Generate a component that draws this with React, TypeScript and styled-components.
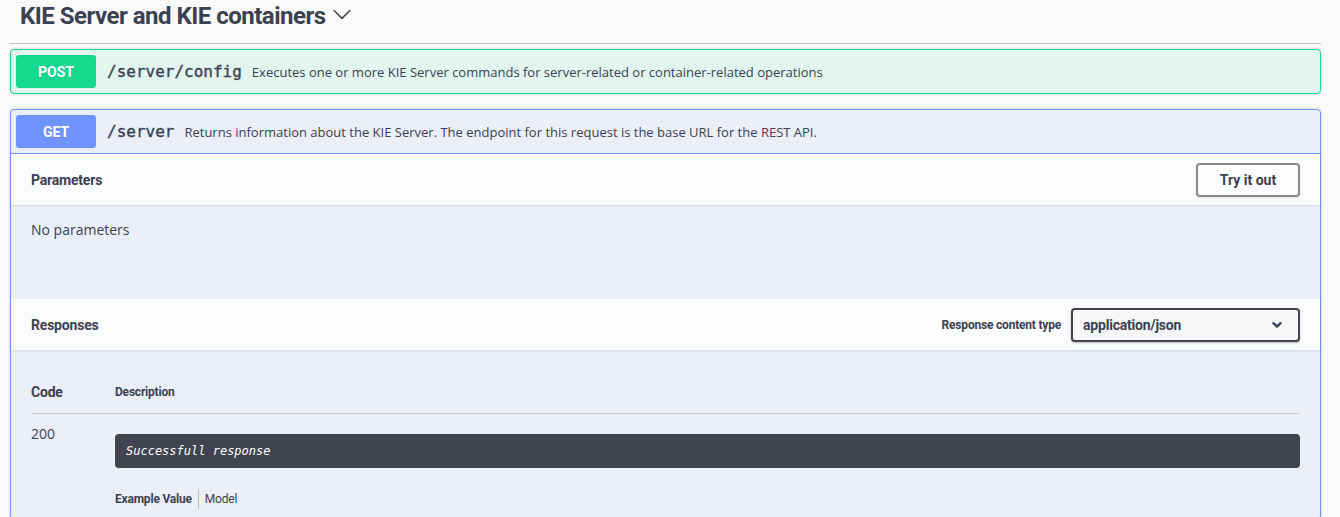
import React from "react";
import styled, { createGlobalStyle } from "styled-components";

const Global = createGlobalStyle`
  html, body { margin: 0; padding: 0; background: #fafafa; }
  body { font-family: "Open Sans", sans-serif; color: #3b4151; }
  * { box-sizing: border-box; }
`;

const HEAD = `Roboto, "Open Sans", sans-serif`;
const MONO = `"DejaVu Sans Mono", "Liberation Mono", monospace`;

const Wrapper = styled.div`
  padding: 0 19px 0 10px;
`;

const TagHeader = styled.h4`
  display: flex;
  align-items: center;
  margin: 0 0 5px;
  padding: 0 0 11px 10px;
  height: 44px;
  border-bottom: 1px solid rgba(59, 65, 81, 0.3);
  font-family: ${HEAD};
  font-size: 24px;
  font-weight: 700;
  line-height: 32px;
  letter-spacing: -0.5px;
  color: #3b4151;
`;

const TagArrow = styled.svg`
  width: 20px;
  height: 20px;
  margin-left: 6px;
  margin-top: -4px;
  fill: #3b4151;
`;

const OpBlock = styled.div<{ $c: string }>`
  border: 1px solid ${(p) => p.$c};
  background: ${(p) => p.$c}1a;
  border-radius: 4px;
  margin: 0 0 15px;
  box-shadow: 0 0 3px rgba(0, 0, 0, 0.19);
`;

const Summary = styled.div<{ $c: string; $open?: boolean }>`
  display: flex;
  align-items: center;
  padding: 5px;
  border-bottom: ${(p) => (p.$open ? `1px solid ${p.$c}` : "none")};
`;

const Method = styled.span<{ $c: string }>`
  display: flex;
  align-items: center;
  justify-content: center;
  width: 80px;
  height: 33px;
  border-radius: 3px;
  background: ${(p) => p.$c};
  color: #fff;
  font-family: ${HEAD};
  font-size: 14px;
  font-weight: 700;
  text-shadow: 0 1px 0 rgba(0, 0, 0, 0.1);
`;

const Path = styled.span`
  padding: 0 10px 0 11px;
  font-family: ${MONO};
  font-size: 16px;
  font-weight: 400;
  -webkit-text-stroke: 0.35px #3b4151;
  color: #3b4151;
`;

const SummaryDesc = styled.span`
  font-family: "Open Sans", sans-serif;
  font-size: 13px;
  color: #3b4151;
`;

const SectionHeader = styled.div`
  display: flex;
  align-items: center;
  min-height: 51px;
  padding: 8px 20px;
  background: rgba(255, 255, 255, 0.8);
  box-shadow: 0 1px 2px rgba(0, 0, 0, 0.1);
  position: relative;
`;

const SectionTitle = styled.h4`
  flex: 1;
  margin: 0;
  font-family: ${HEAD};
  font-size: 14px;
  font-weight: 700;
  letter-spacing: -0.2px;
  color: #3b4151;
`;

const TryButton = styled.button`
  height: 34px;
  width: 104px;
  border: 2px solid #888;
  border-radius: 4px;
  background: transparent;
  font-family: ${HEAD};
  font-size: 14px;
  font-weight: 700;
  color: #3b4151;
  box-shadow: 0 1px 2px rgba(0, 0, 0, 0.1);
`;

const NoParams = styled.div`
  height: 94px;
  padding: 15px 20px;
  font-family: "Open Sans", sans-serif;
  font-size: 14px;
  line-height: 20px;
  color: #3b4151;
`;

const ContentType = styled.label`
  display: flex;
  align-items: center;
  gap: 10px;
  font-family: ${HEAD};
  font-size: 12px;
  font-weight: 700;
  letter-spacing: -0.2px;
  color: #3b4151;
`;

const Select = styled.div`
  display: flex;
  align-items: center;
  justify-content: space-between;
  width: 229px;
  height: 34px;
  padding: 0 16px 0 10px;
  border: 2px solid #41444e;
  border-radius: 4px;
  background: #f7f7f7;
  box-shadow: 0 1px 2px rgba(0, 0, 0, 0.25);
  font-family: ${HEAD};
  font-size: 14px;
  font-weight: 700;
  color: #3b4151;
`;

const SmallChevron = styled.svg`
  width: 10px;
  height: 10px;
  fill: none;
  stroke: #3b4151;
  stroke-width: 2.4;
  stroke-linecap: round;
  stroke-linejoin: round;
`;

const ResponsesBody = styled.div`
  padding: 20px 20px 10px;
`;

const Table = styled.div`
  display: grid;
  grid-template-columns: 84px 1fr;
`;

const HeadCell = styled.div<{ $big?: boolean }>`
  display: flex;
  align-items: center;
  height: 44px;
  padding-top: 1px;
  border-bottom: 1px solid rgba(59, 65, 81, 0.2);
  font-family: ${HEAD};
  font-size: ${(p) => (p.$big ? "14px" : "12px")};
  font-weight: 700;
  letter-spacing: -0.2px;
  color: #3b4151;
`;

const CodeCell = styled.div`
  padding-top: 10px;
  font-family: "Open Sans", sans-serif;
  font-size: 14px;
  line-height: 20px;
  color: #3b4151;
`;

const DescCell = styled.div`
  padding-top: 20px;
`;

const Markdown = styled.div`
  height: 34px;
  padding: 0 11px;
  display: flex;
  align-items: center;
  border-radius: 4px;
  background: #41444e;
  color: #fff;
  font-family: ${MONO};
  font-size: 12px;
  font-style: italic;
`;

const Tabs = styled.ul`
  display: flex;
  margin: 21px 0 0;
  padding: 0;
  list-style: none;
`;

const Tab = styled.li<{ $active?: boolean }>`
  font-family: ${HEAD};
  font-size: 12px;
  line-height: 20px;
  font-weight: ${(p) => (p.$active ? 700 : 400)};
  letter-spacing: -0.2px;
  color: #3b4151;
  padding-right: 6px;
  margin-right: 6px;
  border-right: ${(p) => (p.$active ? "1px solid rgba(0,0,0,.2)" : "none")};
`;

const arrowPath =
  "M17.418 6.109c.272-.268.709-.268.979 0s.271.701 0 .969l-7.908 7.83c-.27.268-.707.268-.979 0l-7.908-7.83c-.27-.268-.27-.701 0-.969.271-.268.709-.268.979 0L10 13.25l7.418-7.141z";

const POST = "#14d98f";
const GET = "#7094ff";

export default function App() {
  return (
    <>
      <Global />
      <Wrapper>
        <TagHeader>
          KIE Server and KIE containers
          <TagArrow viewBox="0 0 20 20">
            <path d={arrowPath} />
          </TagArrow>
        </TagHeader>

        <OpBlock $c={POST}>
          <Summary $c={POST}>
            <Method $c={POST}>POST</Method>
            <Path>/server/config</Path>
            <SummaryDesc>
              Executes one or more KIE Server commands for server-related or container-related operations
            </SummaryDesc>
          </Summary>
        </OpBlock>

        <OpBlock $c={GET}>
          <Summary $c={GET} $open>
            <Method $c={GET}>GET</Method>
            <Path>/server</Path>
            <SummaryDesc>
              Returns information about the KIE Server. The endpoint for this request is the base URL for the REST API.
            </SummaryDesc>
          </Summary>

          <SectionHeader>
            <SectionTitle>Parameters</SectionTitle>
            <TryButton>Try it out</TryButton>
          </SectionHeader>
          <NoParams>No parameters</NoParams>

          <SectionHeader>
            <SectionTitle>Responses</SectionTitle>
            <ContentType>
              Response content type
              <Select>
                application/json
                <SmallChevron viewBox="0 0 10 10">
                  <path d="M1.5 3.2 L5 6.7 L8.5 3.2" />
                </SmallChevron>
              </Select>
            </ContentType>
          </SectionHeader>

          <ResponsesBody>
            <Table>
              <HeadCell $big>Code</HeadCell>
              <HeadCell>Description</HeadCell>
              <CodeCell>200</CodeCell>
              <DescCell>
                <Markdown>Successfull response</Markdown>
                <Tabs>
                  <Tab $active>Example Value</Tab>
                  <Tab>Model</Tab>
                </Tabs>
              </DescCell>
            </Table>
          </ResponsesBody>
        </OpBlock>
      </Wrapper>
    </>
  );
}
